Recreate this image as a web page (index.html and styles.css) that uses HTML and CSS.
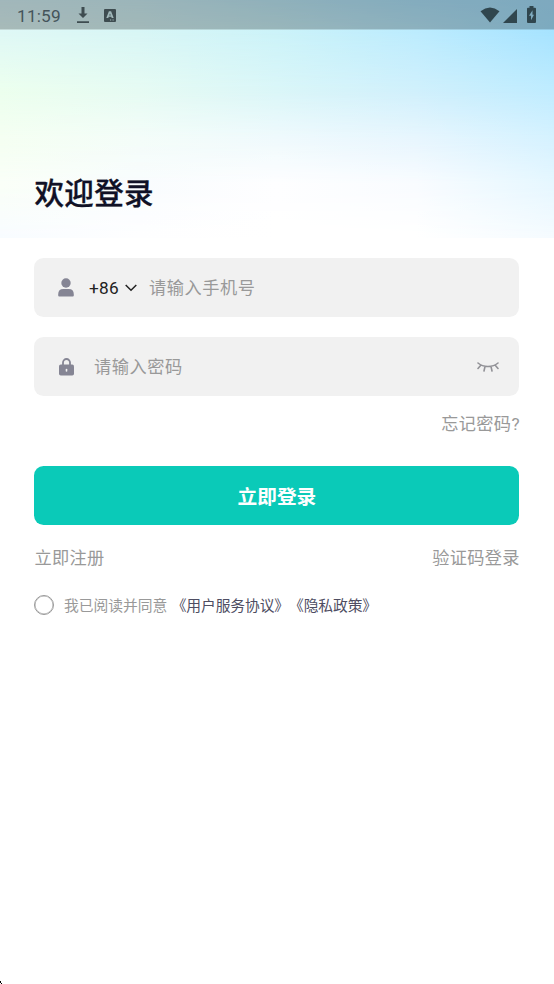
FILE: index.html
```html
<!DOCTYPE html>
<html lang="zh-CN">
<head>
<meta charset="utf-8">
<title>欢迎登录</title>
<link rel="stylesheet" href="styles.css">
</head>
<body>
<header class="hero">
  <div class="wash wash-1"></div>
  <div class="wash wash-2"></div>
  <div class="wash wash-3"></div>
  <div class="wash wash-4"></div>
  <div class="wash wash-5"></div>
  <div class="status">
    <span class="time">11:59</span>
    <svg class="download" width="14" height="18" viewBox="0 0 14 18"><path d="M5.500 1h3v6.500H11.500L7 12 2.500 7.500h3zM1 15.300h12v1.700H1z"/></svg>
    <svg class="keyboard" width="12" height="13" viewBox="0 0 12 13"><path fill-rule="evenodd" d="M1 0h10q1 0 1 1v11q0 1-1 1H1q-1 0-1-1V1q0-1 1-1zM4.900 2.300 2.300 9h2l.4-1.200h2.600L7.700 9h2L7.100 2.300zM6 4.500 6.800 6.500H5.200zM6 10.500v1h1.200v-1zM8.500 10.500v1h1.200v-1z"/></svg>
    <div class="signals">
      <svg width="20" height="16" viewBox="0 0 20 16"><path d="M.5 4.200Q10-3 19.500 4.200L10 15.500z"/></svg>
      <svg class="cell" width="14" height="14" viewBox="0 0 14 14"><path d="M14 0v14H0z"/></svg>
      <svg class="battery" width="9" height="17" viewBox="0 0 9 17"><path fill-rule="evenodd" d="M2.500 0h4v1.700H8q1 0 1 1V16q0 1-1 1H1q-1 0-1-1V2.700q0-1 1-1h1.500zM5.500 4.200 2 9.800h2v4.400l3-5.500H5.500z"/></svg>
    </div>
  </div>
  <h1>欢迎登录</h1>
</header>
<main>
  <div class="field">
    <svg class="user" width="16" height="19" viewBox="0 0 16 19"><circle cx="8" cy="5" r="4.700"/><path d="M.2 17.500v-1.200Q.2 11 5.300 11h5.400q5.100 0 5.100 5.300v1.200q0 1-1 1H1.200q-1 0-1-1z"/></svg>
    <span class="code">+86</span>
    <svg class="chevron" width="12" height="8" viewBox="0 0 12 8"><path d="m.7 1 5.300 5.300L11.300 1"/></svg>
    <span class="hint">请输入手机号</span>
  </div>
  <div class="field">
    <svg class="lock" width="15" height="18" viewBox="0 0 15 18"><path class="shackle" d="M4 8V4.500a3.500 3.500 0 0 1 7 0V8"/><rect y="6.500" width="15" height="11" rx="1.800"/><rect class="keyhole" x="6.700" y="10.700" width="1.600" height="3" rx=".8"/></svg>
    <span class="hint">请输入密码</span>
    <svg class="eye" width="22" height="12" viewBox="0 0 22 12"><path d="M1 2Q5 5.500 11 5.500T21 2M4 4 1 7.500M8 5.500 7 10M14 5.500l1 4.500M18 4l3 3.500"/></svg>
  </div>
  <a class="forgot">忘记密码?</a>
  <button class="submit">立即登录</button>
  <nav class="links"><a>立即注册</a><a>验证码登录</a></nav>
  <div class="consent">
    <span class="radio"></span>
    <span class="agree">我已阅读并同意</span>
    <a class="policy">《用户服务协议》</a><a class="policy">《隐私政策》</a>
  </div>
</main>
<svg class="corner" width="2" height="4" viewBox="0 0 2 4"><path d="M0 1h1v2h1v1H1V3H0z"/></svg>
</body>
</html>
```
FILE: styles.css
```css
* { box-sizing: border-box; }
body {
  margin: 0;
  height: 984px;
  position: relative;
  overflow: hidden;
  background: #fff;
  font-family: Roboto, "Noto Sans CJK SC", sans-serif;
  font-size: 17.23px;
  color: #999;
}
svg { display: block; flex: none; }
.hero {
  position: relative;
  height: 238px;
  background: linear-gradient(90deg, #d8f5fa, #d0f2f8, #c0ecfa, #b0e6fe, #a8e2ff);
}
/* Each wash fades in over the previous one to form a soft two-way gradient. */
.wash { position: absolute; inset: 0; }
.wash-1 {
  background: linear-gradient(90deg, #dff8f6, #d8f6f6, #ccf3f9, #bcecfe, #a6e3ff);
  mask-image: linear-gradient(transparent 0, #000 30px);
}
.wash-2 {
  background: linear-gradient(90deg, #ecffee, #e6fbf3, #daf6f8, #d0f0fc, #bfecff);
  mask-image: linear-gradient(transparent 30px, #000 90px);
}
.wash-3 {
  background: linear-gradient(90deg, #f5fff2, #f4fdf9, #f0fafd, #e8f6fe, #d6f2ff);
  mask-image: linear-gradient(transparent 90px, #000 140px);
}
.wash-4 {
  background: linear-gradient(90deg, #fafff8, #f9fcfe, #fefeff, #f9fcff, #e6f7ff);
  mask-image: linear-gradient(transparent 140px, #000 185px);
}
.wash-5 {
  background: linear-gradient(90deg, #f8fcff, #fefeff, #fff, #fff, #f5fbff);
  mask-image: linear-gradient(transparent 185px, #000 238px);
}
.status {
  position: relative;
  display: flex;
  align-items: center;
  height: 29px;
  padding: 0 18px 0 17px;
  background: rgba(0, 0, 0, .25);
  box-shadow: 0 1px rgba(0, 0, 0, .12);
  color: #45545a;
  fill: #3e4c50;
}
.time { width: 59px; font-size: 17.23px; line-height: 28px; padding-top: 2px; letter-spacing: .2px; }
.download { margin-right: 14px; }
.keyboard { margin-top: 1px; }
.signals { display: flex; align-items: center; margin-left: auto; fill: #30464e; }
.signals svg:first-child { margin-right: 3px; }
.cell { margin: 2px 10px 0 0; }
h1 {
  position: relative;
  margin: 0;
  padding: 143px 0 0 34.500px;
  font-size: 29.540px;
  line-height: 44px;
  font-weight: 500;
  letter-spacing: .3px;
  color: #101126;
  -webkit-text-stroke: .3px #101126;
}
main { padding: 20.400px 34.600px 0 34.400px; }
.field {
  display: flex;
  align-items: center;
  height: 58.600px;
  margin-bottom: 20.200px;
  padding: 0 20px 0 24px;
  border-radius: 9.500px;
  background: #f1f1f1;
  line-height: 26px;
}
.field + .field { padding-top: 1px; }
.hint { letter-spacing: .55px; }
.user, .lock { fill: #858594; }
.code { width: 33px; margin: 0 3px 0 14.500px; color: #222; letter-spacing: .3px; }
.chevron { margin-right: 12px; fill: none; stroke: #222; stroke-width: 1.500; }
.lock { margin: 0 19.500px 0 1px; }
.shackle { fill: none; stroke: #858594; stroke-width: 1.800; }
.keyhole { fill: #f1f1f1; }
.eye { margin-left: auto; fill: none; stroke: #929297; stroke-width: 1.600; stroke-linecap: round; }
.forgot { display: block; margin: -5px -.5px 0 0; text-align: right; line-height: 26px; letter-spacing: .35px; }
.submit {
  display: block;
  width: 100%;
  height: 59px;
  margin-top: 28.900px;
  padding: 6px 0 0;
  border: 0;
  border-radius: 9.500px;
  background: #0acab8;
  color: #fff;
  font: 700 19.690px/30px Roboto, "Noto Sans CJK SC", sans-serif;
}
.links { display: flex; justify-content: space-between; margin: 20px -.5px 0 0; line-height: 26px; letter-spacing: .3px; }
.consent { display: flex; align-items: center; margin-top: 24px; font-size: 14.770px; line-height: 22px; }
.radio { width: 20px; height: 20px; margin: -1px 10px 0 -.4px; border: 1.500px solid #999; border-radius: 50%; box-shadow: inset 0 0 0 .5px #aaa; }
.agree { margin-right: 4.300px; }
.policy { color: #4e4d62; letter-spacing: -.1px; }
.corner { position: absolute; left: 0; bottom: 0; }
```
